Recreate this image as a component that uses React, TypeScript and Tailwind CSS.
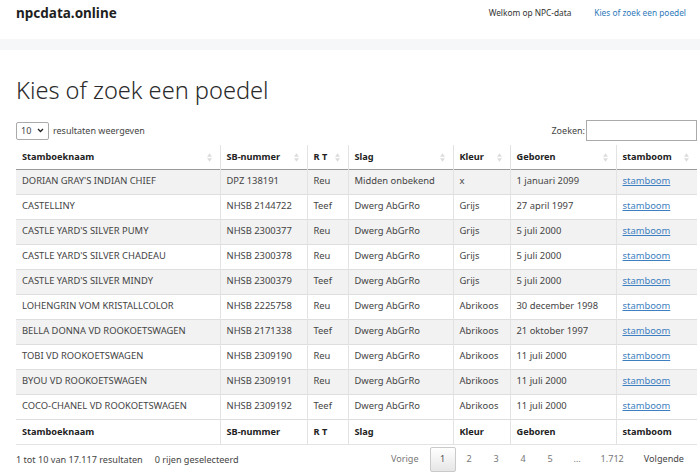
import React from 'react'

const rows = [
  ["DORIAN GRAY'S INDIAN CHIEF", 'DPZ 138191', 'Reu', 'Midden onbekend', 'x', '1 januari 2099'],
  ['CASTELLINY', 'NHSB 2144722', 'Teef', 'Dwerg AbGrRo', 'Grijs', '27 april 1997'],
  ["CASTLE YARD'S SILVER PUMY", 'NHSB 2300377', 'Reu', 'Dwerg AbGrRo', 'Grijs', '5 juli 2000'],
  ["CASTLE YARD'S SILVER CHADEAU", 'NHSB 2300378', 'Reu', 'Dwerg AbGrRo', 'Grijs', '5 juli 2000'],
  ["CASTLE YARD'S SILVER MINDY", 'NHSB 2300379', 'Teef', 'Dwerg AbGrRo', 'Grijs', '5 juli 2000'],
  ['LOHENGRIN VOM KRISTALLCOLOR', 'NHSB 2225758', 'Reu', 'Dwerg AbGrRo', 'Abrikoos', '30 december 1998'],
  ['BELLA DONNA VD ROOKOETSWAGEN', 'NHSB 2171338', 'Teef', 'Dwerg AbGrRo', 'Abrikoos', '21 oktober 1997'],
  ['TOBI VD ROOKOETSWAGEN', 'NHSB 2309190', 'Reu', 'Dwerg AbGrRo', 'Abrikoos', '11 juli 2000'],
  ['BYOU VD ROOKOETSWAGEN', 'NHSB 2309191', 'Reu', 'Dwerg AbGrRo', 'Abrikoos', '11 juli 2000'],
  ['COCO-CHANEL VD ROOKOETSWAGEN', 'NHSB 2309192', 'Teef', 'Dwerg AbGrRo', 'Abrikoos', '11 juli 2000'],
]

const columns = [
  { label: 'Stamboeknaam', w: 'w-[204px]' },
  { label: 'SB-nummer', w: 'w-[87px]' },
  { label: 'R T', w: 'w-[41px]' },
  { label: 'Slag', w: 'w-[105px]' },
  { label: 'Kleur', w: 'w-[57px]' },
  { label: 'Geboren', w: 'w-[106px]' },
  { label: 'stamboom', w: 'w-[81px]' },
]

function SortIcon() {
  return (
    <svg width="5" height="9" viewBox="0 0 6 10" className="absolute right-[8px] top-[8px]">
      <path d="M3 0 L6 4 L0 4 Z" fill="#dcdcdc" />
      <path d="M3 10 L6 6 L0 6 Z" fill="#dcdcdc" />
    </svg>
  )
}

export default function App() {
  return (
    <div className="w-[700px] h-[475px] overflow-hidden bg-white text-[#444] font-['Noto_Sans',sans-serif]">
      {/* Navbar */}
      <nav className="h-[39px] flex items-start justify-between px-[16px] pt-[2px]">
        <div className="text-[13.5px] font-bold leading-[22px] text-[#1f1f1f]">npcdata.online</div>
        <div className="flex gap-[23px] text-[8.3px] leading-[22px] pt-[0px] -mr-[2px]">
          <span className="text-[#333]">Welkom op NPC-data</span>
          <span className="text-[#2f79b9]">Kies of zoek een poedel</span>
        </div>
      </nav>
      <div className="h-[11px] bg-[#f6f7f8]" />

      <main className="px-[16px]">
        <h1 className="mt-[25px] text-[23.6px] font-light leading-[30px] text-[#2a2a2a]">Kies of zoek een poedel</h1>

        {/* Controls */}
        <div className="mt-[15px] flex items-center justify-between text-[9px]">
          <div className="flex items-center gap-[4px]">
            <div className="w-[33px] h-[18px] border border-[#aaa] rounded-[2px] flex items-center px-[4px] text-[9px]">
              <span>10</span>
              <svg width="7" height="5" viewBox="0 0 7 5" className="ml-auto">
                <path d="M1 1 L3.5 3.5 L6 1" stroke="#222" strokeWidth="1.3" fill="none" />
              </svg>
            </div>
            <span>resultaten weergeven</span>
          </div>
          <div className="flex items-center gap-[1px] -mr-[13px]">
            <span>Zoeken:</span>
            <div className="w-[111px] h-[21px] border border-[#aaa] bg-white" />
          </div>
        </div>

        {/* Table */}
        <table className="mt-[4px] w-[681px] border-collapse table-fixed text-[9.4px]">
          <thead>
            <tr className="h-[24px] border-b border-[#9a9a9a]">
              {columns.map((c, i) => (
                <th
                  key={c.label}
                  className={`${c.w} relative text-left font-bold text-[#222] text-[9.2px] px-[6px] ${i > 0 ? 'border-l border-[#e3e3e3]' : ''}`}
                >
                  {c.label}
                  <SortIcon />
                </th>
              ))}
            </tr>
          </thead>
          <tbody>
            {rows.map((r, idx) => (
              <tr key={idx} className={`h-[25px] border-b border-[#dedede] ${idx % 2 === 0 ? 'bg-[#f2f2f2]' : 'bg-white'}`}>
                {r.map((cell, i) => (
                  <td key={i} className={`px-[6px] whitespace-nowrap ${i > 0 ? 'border-l border-[#e3e3e3]' : ''}`}>
                    {cell}
                  </td>
                ))}
                <td className="px-[6px] border-l border-[#e3e3e3]">
                  <span className="text-[#3d7fc0] underline">stamboom</span>
                </td>
              </tr>
            ))}
          </tbody>
          <tfoot>
            <tr className="h-[25px] border-t border-[#9a9a9a] border-b border-b-[#e3e3e3]">
              {columns.map((c, i) => (
                <th key={c.label} className={`text-left font-bold text-[#222] text-[9.2px] px-[6px] ${i > 0 ? 'border-l border-[#e3e3e3]' : ''}`}>
                  {c.label}
                </th>
              ))}
            </tr>
          </tfoot>
        </table>

        {/* Footer */}
        <div className="mt-[2px] flex items-center justify-between text-[9.1px]">
          <div className="flex gap-[12px] pt-[2px]">
            <span>1 tot 10 van 17.117 resultaten</span>
            <span>0 rijen geselecteerd</span>
          </div>
          <div className="flex items-center text-[#777] -mr-[10px]">
            <span className="px-[11px]">Vorige</span>
            <span className="w-[26px] h-[25px] flex items-center justify-center border border-[#cacaca] rounded-[2px] bg-gradient-to-b from-white to-[#e6e6e6] text-[#555]">1</span>
            <span className="w-[27px] text-center">2</span>
            <span className="w-[27px] text-center">3</span>
            <span className="w-[27px] text-center">4</span>
            <span className="w-[27px] text-center">5</span>
            <span className="w-[27px] text-center">…</span>
            <span className="px-[10px]">1.712</span>
            <span className="px-[10px] text-[#444]">Volgende</span>
          </div>
        </div>
      </main>
    </div>
  )
}
